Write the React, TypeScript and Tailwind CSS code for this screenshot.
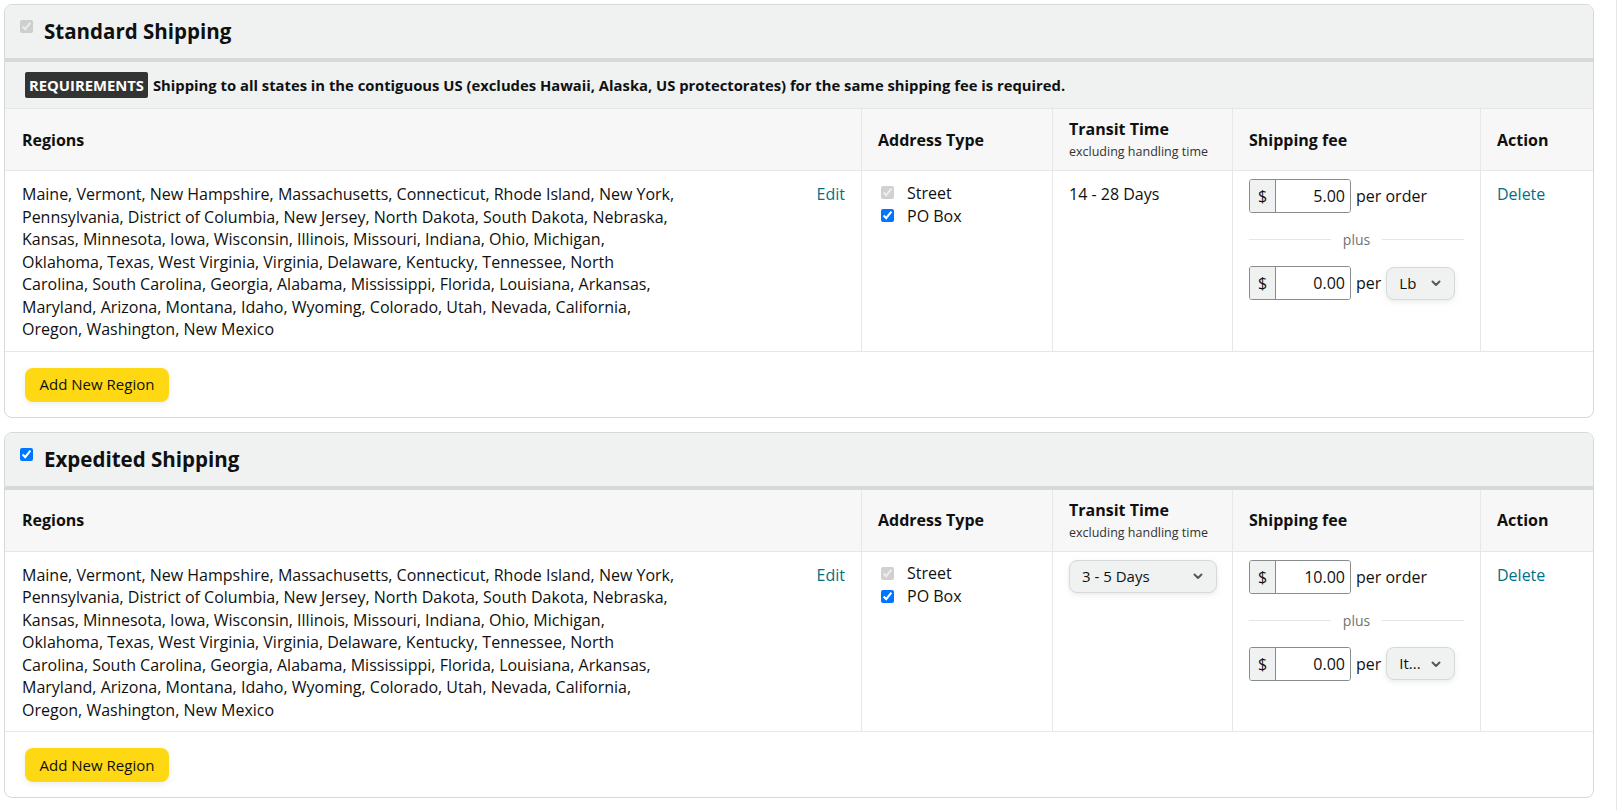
import React from 'react';

const REGION_LINES = [
  'Maine, Vermont, New Hampshire, Massachusetts, Connecticut, Rhode Island, New York,',
  'Pennsylvania, District of Columbia, New Jersey, North Dakota, South Dakota, Nebraska,',
  'Kansas, Minnesota, Iowa, Wisconsin, Illinois, Missouri, Indiana, Ohio, Michigan,',
  'Oklahoma, Texas, West Virginia, Virginia, Delaware, Kentucky, Tennessee, North',
  'Carolina, South Carolina, Georgia, Alabama, Mississippi, Florida, Louisiana, Arkansas,',
  'Maryland, Arizona, Montana, Idaho, Wyoming, Colorado, Utah, Nevada, California,',
  'Oregon, Washington, New Mexico',
];

function Chevron() {
  return (
    <svg width="12" height="12" viewBox="0 0 12 12" className="shrink-0">
      <path d="M2.5 4.5 L6 8 L9.5 4.5" fill="none" stroke="#565959" strokeWidth="2" strokeLinecap="round" strokeLinejoin="round" />
    </svg>
  );
}

function SelectBox({ label, width }: { label: string; width: string }) {
  return (
    <div
      className={`${width} h-[33px] flex items-center justify-between pl-3 pr-3 bg-[#f0f2f2] border border-[#d5d9d9] rounded-lg shadow-[0_2px_5px_rgba(213,217,217,0.5)] text-[15px] text-[#0f1111]`}
    >
      <span className="whitespace-nowrap">{label}</span>
      <Chevron />
    </div>
  );
}

function MoneyInput({ value }: { value: string }) {
  return (
    <div className="flex w-[102px] h-[34px] border border-[#888c8c] rounded-[3px] overflow-hidden text-[16px] text-[#0f1111]">
      <div className="w-[26px] flex items-center justify-center bg-[#f0f2f2] border-r border-[#888c8c]">$</div>
      <div className="flex-1 flex items-center justify-end pr-[5px] bg-white">{value}</div>
    </div>
  );
}

function ShippingCard({
  title,
  enabled,
  requirements,
  transit,
  fee,
  unit,
}: {
  title: string;
  enabled: boolean;
  requirements?: boolean;
  transit: React.ReactNode;
  fee: string;
  unit: string;
}) {
  return (
    <div className="border border-[#d5d9d9] rounded-lg overflow-hidden bg-white">
      {/* en-tête */}
      <div className="h-[53px] flex items-start px-[15px] bg-[#f0f2f2] border-b-[4px] border-[#d5d9d9] box-content">
        <input
          type="checkbox"
          checked
          disabled={!enabled}
          readOnly
          className="mt-[15px] w-[13px] h-[13px] m-0"
        />
        <span className="ml-[11px] self-center text-[20.5px] font-bold text-[#0f1111] leading-none">{title}</span>
      </div>

      {requirements && (
        <div className="h-[47px] flex items-center px-5 bg-[#f0f2f2] border-b border-[#e7e7e7] text-[14.8px] font-bold text-[#0f1111]">
          <span className="px-[4px] h-[26px] flex items-center bg-[#333333] text-white rounded-[2px]">REQUIREMENTS</span>
          <span className="ml-[5px]">
            Shipping to all states in the contiguous US (excludes Hawaii, Alaska, US protectorates) for the same shipping fee is required.
          </span>
        </div>
      )}

      {/* tableau */}
      <div className="grid grid-cols-[857px_191px_180px_248px_1fr] text-[#0f1111]">
        <div className="h-[62px] flex items-center px-[17px] bg-[#f7f7f7] border-r border-b border-[#e7e7e7] text-[16px] font-bold">Regions</div>
        <div className="h-[62px] flex items-center px-4 bg-[#f7f7f7] border-r border-b border-[#e7e7e7] text-[16px] font-bold">Address Type</div>
        <div className="h-[62px] flex flex-col justify-center px-4 bg-[#f7f7f7] border-r border-b border-[#e7e7e7]">
          <span className="text-[16px] font-bold leading-5">Transit Time</span>
          <span className="text-[12.5px] leading-4 mt-[5px] text-[#333]">excluding handling time</span>
        </div>
        <div className="h-[62px] flex items-center px-4 bg-[#f7f7f7] border-r border-b border-[#e7e7e7] text-[16px] font-bold">Shipping fee</div>
        <div className="h-[62px] flex items-center px-4 bg-[#f7f7f7] border-b border-[#e7e7e7] text-[16px] font-bold">Action</div>

        <div className="flex justify-between pl-[17px] pr-4 pt-[12px] pb-[10px] border-r border-b border-[#e7e7e7] text-[16px] leading-[22.5px]">
          <div>
            {REGION_LINES.map((l) => (
              <div key={l} className="whitespace-nowrap">{l}</div>
            ))}
          </div>
          <a className="text-[#007185] cursor-pointer">Edit</a>
        </div>
        <div className="px-4 pt-[10px] border-r border-b border-[#e7e7e7] text-[16px]">
          <label className="flex items-center h-[23px]">
            <input type="checkbox" checked disabled readOnly className="ml-[3px] w-[13px] h-[13px]" />
            <span className="ml-[13px]">Street</span>
          </label>
          <label className="flex items-center h-[23px]">
            <input type="checkbox" checked readOnly className="ml-[3px] w-[13px] h-[13px]" />
            <span className="ml-[13px]">PO Box</span>
          </label>
        </div>
        <div className="px-4 pt-[8px] border-r border-b border-[#e7e7e7] text-[16px]">{transit}</div>
        <div className="px-4 pt-[8px] border-r border-b border-[#e7e7e7] text-[16px]">
          <div className="flex items-center">
            <MoneyInput value={fee} />
            <span className="ml-[5px]">per order</span>
          </div>
          <div className="flex items-center h-[53px] text-[14px] text-[#6f7373]">
            <div className="flex-1 h-px bg-[#e3e6e6]" />
            <span className="px-3">plus</span>
            <div className="flex-1 h-px bg-[#e3e6e6]" />
          </div>
          <div className="flex items-center">
            <MoneyInput value="0.00" />
            <span className="ml-[5px] mr-[5px]">per</span>
            <SelectBox label={unit} width="w-[69px]" />
          </div>
        </div>
        <div className="px-4 pt-[12px] border-b border-[#e7e7e7] text-[16px] leading-[22.5px]">
          <a className="text-[#007185] cursor-pointer">Delete</a>
        </div>
      </div>

      <div className="px-5 pt-4 pb-[15px]">
        <button className="w-[144px] h-[34px] bg-[#ffd814] rounded-lg text-[15px] text-[#0f1111] shadow-[0_2px_5px_rgba(213,217,217,0.5)]">
          Add New Region
        </button>
      </div>
    </div>
  );
}

export default function App() {
  return (
    <div
      className="flex bg-white min-h-[810px]"
      style={{ fontFamily: '"Open Sans", "Noto Sans", sans-serif' }}
    >
      <div className="w-[1594px] pl-1 pt-1">
        <ShippingCard
          title="Standard Shipping"
          enabled={false}
          requirements
          transit={<div className="pt-[4px] leading-[22.5px]">14 - 28 Days</div>}
          fee="5.00"
          unit="Lb"
        />
        <div className="h-[14px]" />
        <ShippingCard
          title="Expedited Shipping"
          enabled
          transit={<SelectBox label="3 - 5 Days" width="w-[148px]" />}
          fee="10.00"
          unit="It..."
        />
      </div>
      <div className="w-[22px]" />
      <div className="w-px bg-[#e7e7e7]" />
    </div>
  );
}
